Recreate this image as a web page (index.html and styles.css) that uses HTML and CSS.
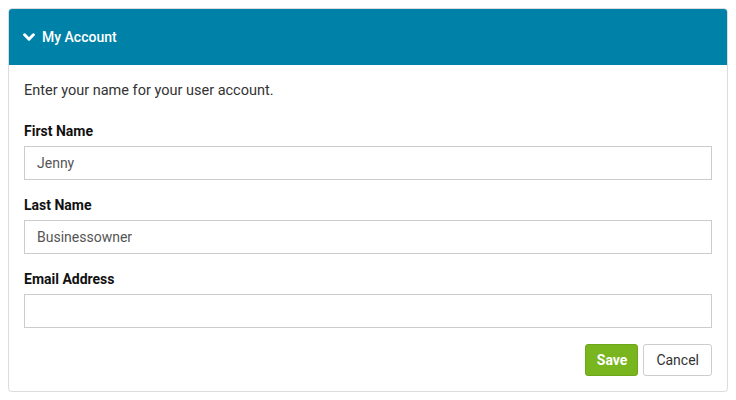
FILE: index.html
```html
<!DOCTYPE html>
<html lang="en">
<head>
    <meta charset="UTF-8">
    <meta name="viewport" content="width=device-width, initial-scale=1.0">
    <title>My Account</title>
    <link rel="stylesheet" href="styles.css">
</head>
<body>
    <div class="panel">
        <div class="panel-heading">
            <svg class="chevron" viewBox="0 0 12 9" width="12" height="9" aria-hidden="true">
                <path d="M1.6 1.8 L6 6.2 L10.4 1.8" fill="none" stroke="#fff" stroke-width="3" stroke-linecap="round" stroke-linejoin="round"/>
            </svg>
            <span>My Account</span>
        </div>

        <div class="panel-body">
            <p class="intro">Enter your name for your user account.</p>

            <label for="first-name">First Name</label>
            <input type="text" id="first-name" value="Jenny">

            <label for="last-name">Last Name</label>
            <input type="text" id="last-name" value="Businessowner">

            <label for="email">Email Address</label>
            <input type="text" id="email" value="">

            <div class="actions">
                <button class="btn btn-save">Save</button>
                <button class="btn btn-cancel">Cancel</button>
            </div>
        </div>
    </div>
</body>
</html>
```

FILE: styles.css
```css
/* Base */
body {
    font-family: Roboto, "Noto Sans", sans-serif;
    font-size: 14px;
    line-height: 20px;
    color: #333;
    background-color: #ffffff;
    margin: 8px;
}

/* Panel */
.panel {
    border: 1px solid #dcdcdc;
    border-radius: 4px;
    box-shadow: 0 1px 2px rgba(0, 0, 0, 0.06);
    overflow: hidden;
}

.panel-heading {
    display: flex;
    align-items: center;
    gap: 7px;
    height: 56px;
    padding: 0 14px;
    background-color: #0081a7;
    color: #ffffff;
    font-weight: 500;
}

.chevron {
    display: block;
}

.panel-body {
    padding: 15px;
}

.intro {
    margin: 0 0 21px 0;
    padding-top: 1px;
    line-height: 19px;
    font-size: 14.5px;
}

/* Labels and inputs */
label {
    display: block;
    font-weight: bold;
    color: #111;
    margin-bottom: 5px;
}

input[type="text"] {
    display: block;
    box-sizing: border-box;
    width: 100%;
    height: 34px;
    padding: 6px 12px;
    margin: 0 0 15px 0;
    border: 1px solid #cccccc;
    border-radius: 0;
    font-family: inherit;
    font-size: 14px;
    color: #555;
}

/* Buttons */
.actions {
    display: flex;
    justify-content: flex-end;
    gap: 5px;
    margin-top: 16px;
}

.btn {
    height: 32px;
    padding: 0 12px;
    border-radius: 3px;
    font-family: inherit;
    font-size: 14px;
    cursor: pointer;
}

.btn-save {
    padding: 0 10px 0 11px;
    background-color: #78b51e;
    border: 1px solid #6ea61a;
    color: #ffffff;
    font-weight: bold;
}

.btn-cancel {
    background-color: #ffffff;
    border: 1px solid #cccccc;
    color: #333;
}
```
